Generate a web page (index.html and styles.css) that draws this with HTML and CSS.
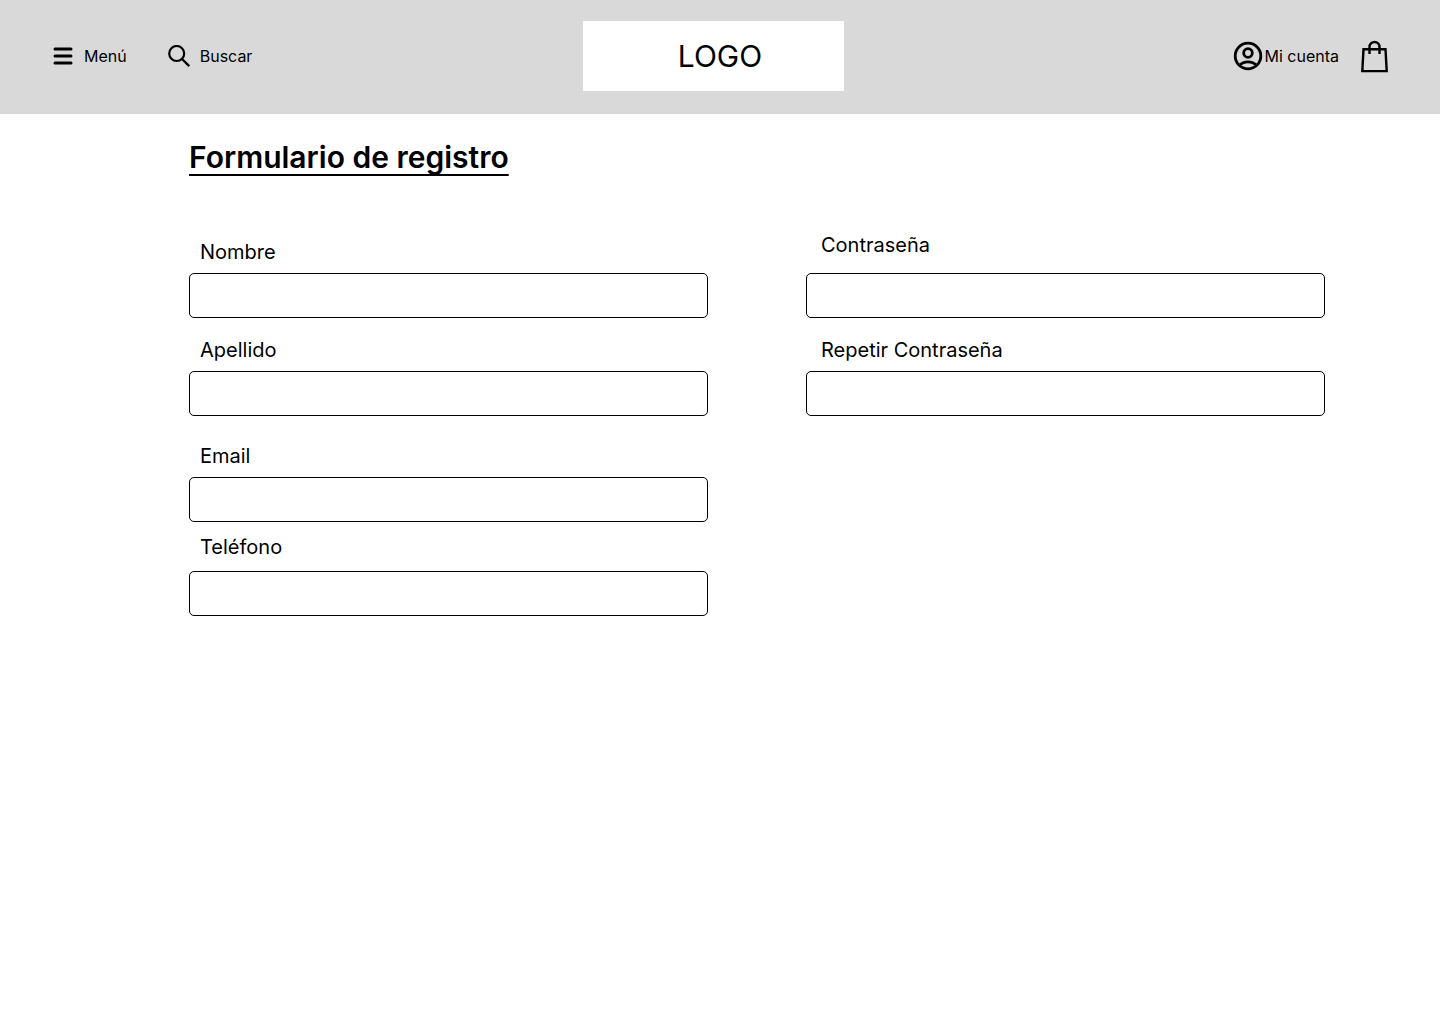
FILE: index.html
```html
<!DOCTYPE html>
<html lang="es">
<head>
  <meta charset="utf-8">
  <meta name="viewport" content="width=device-width, initial-scale=1">
  <title>Formulario de registro</title>
  <link rel="stylesheet" href="styles.css">
</head>
<body>
  <header class="header">
    <nav class="header-start" aria-label="Principal">
      <button class="action action-menu" type="button">
        <svg width="20" height="18" viewBox="0 0 20 18" aria-hidden="true">
          <path d="M2 2h16M2 9h16M2 16h16" fill="none" stroke="currentColor" stroke-width="3" stroke-linecap="round"/>
        </svg>
        Menú
      </button>
      <button class="action action-search" type="button">
        <svg width="22" height="22" viewBox="0 0 22 22" aria-hidden="true">
          <circle cx="8.700" cy="8.500" r="7.500" fill="none" stroke="currentColor" stroke-width="2.200"/>
          <path d="M13.800 13.800l7.400 7.400" fill="none" stroke="currentColor" stroke-width="2.300"/>
        </svg>
        Buscar
      </button>
    </nav>
    <a class="logo" href="#">LOGO</a>
    <div class="header-end">
      <a class="action action-account" href="#">
        <svg width="30" height="30" viewBox="0 0 30 30" aria-hidden="true">
          <g fill="none" stroke="currentColor" stroke-width="2.800">
            <circle cx="15" cy="15" r="12.800"/>
            <circle cx="15" cy="12" r="4.300"/>
            <path d="M6.500 24.200c2.200-2.300 5.200-3.400 8.500-3.400s6.300 1.100 8.500 3.400"/>
          </g>
        </svg>
        Mi cuenta
      </a>
      <a class="action" href="#" aria-label="Bolsa de compra">
        <svg width="28" height="33" viewBox="0 0 28 33" aria-hidden="true">
          <path d="M2.500 9.200h22l1.200 21.900H1.300z" fill="none" stroke="currentColor" stroke-width="2.400"/>
          <path d="M8.500 14V7a5 5 0 0 1 10 0v7" fill="none" stroke="currentColor" stroke-width="2.400"/>
        </svg>
      </a>
    </div>
  </header>

  <main class="main">
    <h1 class="title">Formulario de registro</h1>
    <form class="form">
      <div class="column column-personal">
        <div class="field">
          <label class="label" for="nombre">Nombre</label>
          <input class="input" id="nombre" type="text" autocomplete="given-name">
        </div>
        <div class="field">
          <label class="label" for="apellido">Apellido</label>
          <input class="input" id="apellido" type="text" autocomplete="family-name">
        </div>
        <div class="field field-contact">
          <label class="label" for="email">Email</label>
          <input class="input" id="email" type="email" autocomplete="email">
        </div>
        <div class="field field-phone">
          <label class="label" for="telefono">Teléfono</label>
          <input class="input" id="telefono" type="tel" autocomplete="tel">
        </div>
      </div>
      <div class="column column-password">
        <div class="field field-password">
          <label class="label" for="contrasena">Contraseña</label>
          <input class="input" id="contrasena" type="password" autocomplete="new-password">
        </div>
        <div class="field">
          <label class="label" for="repetir">Repetir Contraseña</label>
          <input class="input" id="repetir" type="password" autocomplete="new-password">
        </div>
      </div>
    </form>
  </main>
</body>
</html>
```

FILE: styles.css
```css
* {
  box-sizing: border-box;
}

body {
  margin: 0;
  background: #fff;
  color: #000;
  font-family: Inter, "Liberation Sans", sans-serif;
  font-size: 16px;
  line-height: 24px;
}

.header {
  display: grid;
  grid-template-columns: 1fr auto 1fr;
  align-items: center;
  padding: 21px 51px 23px 38px;
  background: #d9d9d9;
}

.header-start,
.header-end {
  display: flex;
  align-items: center;
}

.header-start {
  gap: 41px;
  padding-left: 15px;
}

.header-end {
  justify-content: flex-end;
  gap: 22px;
}

.action {
  display: flex;
  align-items: center;
  padding: 0;
  border: 0;
  background: none;
  color: inherit;
  font: inherit;
  text-decoration: none;
  cursor: pointer;
}

.action-menu {
  gap: 11px;
}

.action-search {
  gap: 10px;
}

.action-account {
  gap: 1px;
}

.logo {
  display: flex;
  align-items: center;
  justify-content: center;
  width: 261px;
  height: 70px;
  padding-left: 13px;
  background: #fff;
  color: inherit;
  font-size: 30px;
  text-decoration: none;
}

.main {
  padding: 24px 115px 64px 189px;
}

.title {
  margin: 0 0 57px;
  font-size: 30px;
  font-weight: 600;
  line-height: 38px;
  text-decoration: underline;
  text-decoration-thickness: 2px;
  text-decoration-skip-ink: none;
  text-underline-offset: 6px;
}

.form {
  display: grid;
  grid-template-columns: 1fr 1fr;
  column-gap: 98px;
  align-items: start;
}

.column {
  display: flex;
  flex-direction: column;
  gap: 20px;
}

.column-personal {
  gap: 0;
  padding-top: 7px;
}

.column-personal .field + .field {
  margin-top: 20px;
}

.column-personal .field + .field-contact {
  margin-top: 28px;
}

.column-personal .field + .field-phone {
  margin-top: 13px;
}

.field {
  display: flex;
  flex-direction: column;
  gap: 9px;
}

.field-phone {
  gap: 12px;
}

.field-password {
  gap: 16px;
}

.label {
  padding-left: 11px;
  font-size: 20px;
}

.column-password .label {
  padding-left: 15px;
}

.input {
  width: 100%;
  height: 45px;
  padding: 0 12px;
  border: 1px solid #000;
  border-radius: 5px;
  background: #fff;
  font: inherit;
}

@media (max-width: 900px) {
  .main {
    padding-right: 24px;
    padding-left: 24px;
  }

  .form {
    grid-template-columns: 1fr;
    row-gap: 20px;
  }
}
```
